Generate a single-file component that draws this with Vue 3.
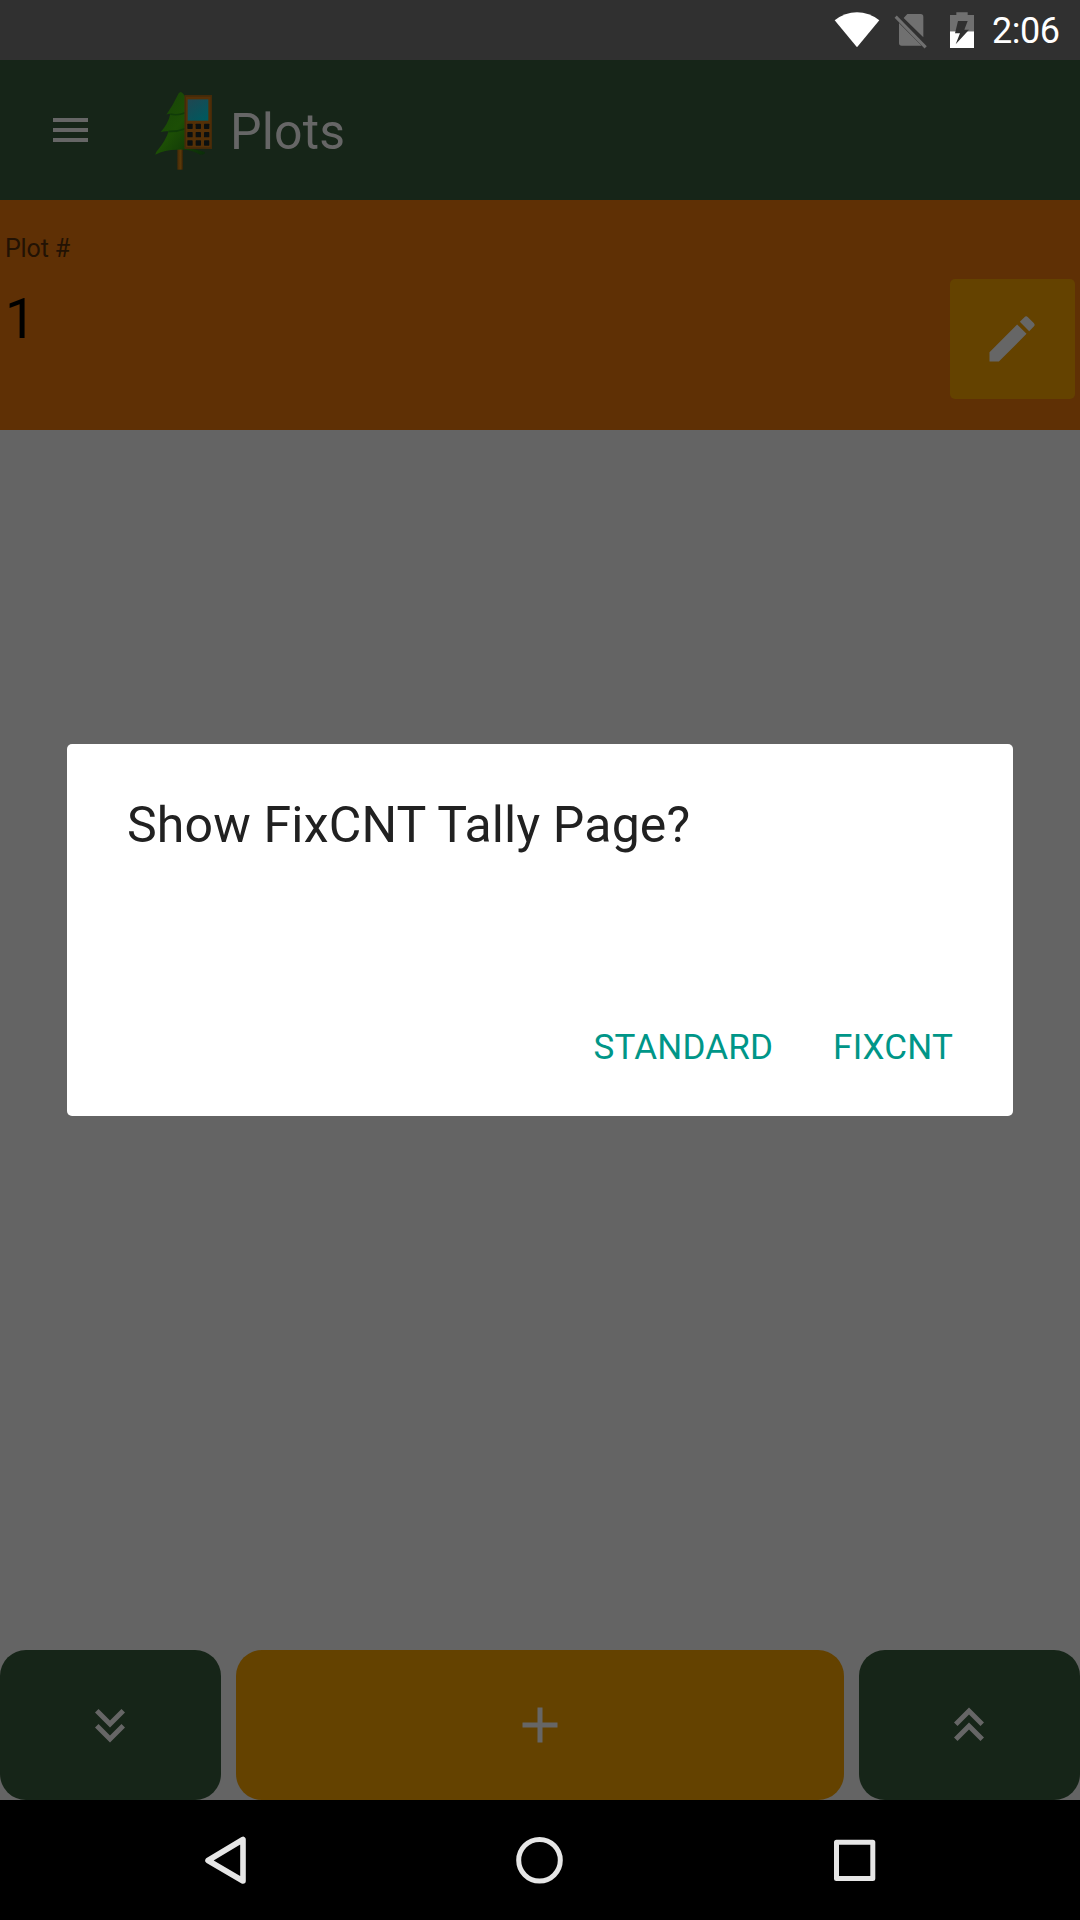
<script setup>
const keys = [0, 1, 2].flatMap((r) => [0, 1, 2].map((c) => ({ x: 142 + c * 25, y: 131 + r * 25 })))
</script>

<template>
  <div class="screen">
    <div class="status">
      <svg class="indicators" viewBox="0 0 480 180">
        <path d="M44 61Q75 37 111 37T178 61L111 142Z" fill="#fff" />
        <path d="M262 42H302Q310 42 310 50V112L251 54ZM237 69L305 137H245Q237 137 237 129Z" fill="#707070" />
        <path d="M227 50L317 142" stroke="#707070" stroke-width="9" />
        <path d="M390 45H409V37H443V45H462V94H390Z" fill="#707070" />
        <path d="M390 94H462V144H390Z" fill="#fff" />
        <path d="M414 63H443L433 89H447L407 133L420 100H405Z" fill="#303030" />
      </svg>
      <span class="clock">2:06</span>
    </div>

    <header class="appbar">
      <svg class="menu" viewBox="0 0 35 24"><path d="M0 2H35M0 12H35M0 22H35" stroke="#666" stroke-width="4" /></svg>
      <svg class="logo" viewBox="0 0 270 300">
        <defs>
          <linearGradient id="leaf" x1="0" y1="0" x2="1" y2="1">
            <stop offset="0" stop-color="#174208" /><stop offset=".5" stop-color="#1c4e05" /><stop offset="1" stop-color="#0a2c09" />
          </linearGradient>
          <linearGradient id="glass" x1="0" y1="0" x2=".7" y2="1">
            <stop offset="0" stop-color="#204651" /><stop offset="1" stop-color="#00585e" />
          </linearGradient>
          <linearGradient id="trunk"><stop offset="0" stop-color="#452a07" /><stop offset=".6" stop-color="#5c3908" /><stop offset="1" stop-color="#302008" /></linearGradient>
          <filter id="soft" color-interpolation-filters="sRGB"><feGaussianBlur stdDeviation="2.2" /></filter>
        </defs>
        <g filter="url(#soft)">
          <path d="M112 205H129V269H112Z" fill="url(#trunk)" />
          <path d="M121 36Q130 38 137 54V200L194 216Q198 224 181 224Q150 206 112 209Q74 209 46 224Q47 216 55 208Q76 183 86 154Q74 153 62 156Q84 132 91 102Q86 100 79 104Q99 76 116 40Z" fill="url(#leaf)" />
          <path d="M86 154Q112 155 136 146M91 102Q113 108 136 98" fill="none" stroke="#103b08" stroke-width="5" />
          <path d="M134 46H216V206H134Z" fill="#543007" />
          <path d="M136 48H214V204H136Z" fill="none" stroke="#442a0a" stroke-width="4" />
          <path d="M143 58H205V122H143Z" fill="url(#glass)" />
          <rect v-for="k in keys" :key="`${k.x}-${k.y}`" :x="k.x" :y="k.y" width="16" height="16" rx="2" fill="#0b1010" />
        </g>
      </svg>
      <span class="heading">Plots</span>
    </header>

    <section class="plot">
      <div class="field">
        <span class="label">Plot #</span>
        <span class="value">1</span>
      </div>
      <div class="edit">
        <svg viewBox="0 0 24 24"><path d="M3 17.25V21h3.75L17.81 9.94l-3.75-3.75L3 17.25zM20.71 7.04a1 1 0 0 0 0-1.41l-2.34-2.34a1 1 0 0 0-1.41 0l-1.83 1.83 3.75 3.75z" fill="#666" /></svg>
      </div>
    </section>

    <main class="content">
      <div class="dialog">
        <div class="question">Show FixCNT Tally Page?</div>
        <div class="choices">
          <span>STANDARD</span>
          <span>FIXCNT</span>
        </div>
      </div>
    </main>

    <div class="actions">
      <div class="btn side"><svg viewBox="0 0 24 24"><path d="M16.59 5.59L18 7L12 13L6 7L7.41 5.59L12 10.17ZM16.59 11.59L18 13L12 19L6 13L7.41 11.59L12 16.17Z" /></svg></div>
      <div class="btn add"><svg viewBox="0 0 24 24"><path d="M19 13H13V19H11V13H5V11H11V5H13V11H19Z" /></svg></div>
      <div class="btn side"><svg viewBox="0 0 24 24"><path d="M7.41 18.41L6 17L12 11L18 17L16.59 18.41L12 13.83ZM7.41 12.41L6 11L12 5L18 11L16.59 12.41L12 7.83Z" /></svg></div>
    </div>

    <nav class="nav">
      <svg viewBox="0 0 1080 120" fill="none" stroke="#e6e6e6" stroke-width="5" stroke-linejoin="round">
        <path d="M243 39.5V81L208 60.5Z" stroke-width="5.6" />
        <circle cx="539.5" cy="60.3" r="20.8" />
        <rect x="836.5" y="42.2" width="36.3" height="36.3" />
      </svg>
    </nav>
  </div>
</template>

<style scoped>
.screen {
  width: 1080px;
  height: 1920px;
  display: flex;
  flex-direction: column;
  background: #646464;
  font-family: Roboto, sans-serif;
  overflow: hidden;
}
svg { display: block; flex: none; }
span { white-space: nowrap; }
.status {
  height: 60px;
  flex: none;
  background: #303030;
  display: flex;
  padding-left: 820px;
}
.indicators { width: 160px; height: 60px; }
.clock { margin-left: 12px; font-size: 36px; line-height: 62px; letter-spacing: -0.5px; color: #fff; }
.appbar {
  height: 140px;
  flex: none;
  background: #162518;
  display: flex;
  align-items: center;
  padding-left: 53px;
}
.menu { width: 35px; height: 24px; }
.logo { width: 90px; height: 100px; margin-left: 52px; }
.heading { font-size: 50px; line-height: 60px; letter-spacing: 0.2px; color: #666; margin-top: 3px; }
.plot {
  height: 230px;
  flex: none;
  box-sizing: border-box;
  background: #5f3005;
  display: flex;
  justify-content: space-between;
  padding: 0 5px;
}
.field { display: flex; flex-direction: column; padding-top: 34px; }
.label { font-size: 25px; line-height: 30px; letter-spacing: -0.15px; color: #221204; }
.value { font-size: 55px; line-height: 64px; margin-top: 23px; color: #000; }
.edit {
  width: 125px;
  height: 120px;
  margin-top: 79px;
  border-radius: 5px;
  background: #644200;
  display: flex;
  align-items: center;
  justify-content: center;
}
.edit svg { width: 60px; height: 60px; margin-right: 1px; }
.content { flex: 1; padding: 314px 67px 0; }
.dialog {
  height: 372px;
  box-sizing: border-box;
  border-radius: 5px;
  background: #fff;
  padding: 51px 60px 0;
}
.question { font-size: 50px; line-height: 60px; letter-spacing: 0.17px; color: #212121; white-space: nowrap; }
.choices {
  display: flex;
  justify-content: flex-end;
  gap: 60px;
  margin-top: 172px;
  font-size: 35px;
  line-height: 42px;
  letter-spacing: 0.18px;
  color: #009688;
}
.actions { height: 150px; flex: none; display: flex; gap: 15px; }
.btn { border-radius: 26px; display: flex; align-items: center; justify-content: center; }
.btn svg { width: 60px; height: 60px; fill: #666; }
.side { width: 221px; background: #162518; }
.side svg { margin-right: 1px; }
.add { flex: 1; background: #644200; }
.nav { height: 120px; flex: none; background: #000; }
.nav svg { width: 1080px; height: 120px; }
</style>

<style>
body { margin: 0; background: #646464; }
</style>
